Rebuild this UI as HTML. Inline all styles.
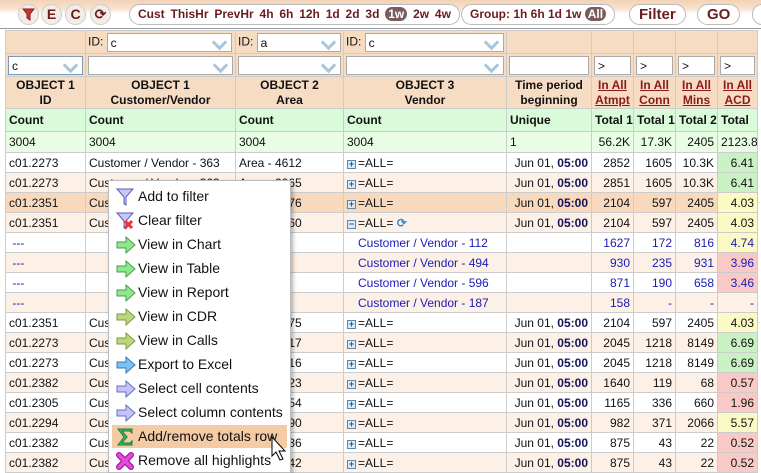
<!DOCTYPE html>
<html><head><meta charset="utf-8"><style>
*{margin:0;padding:0;box-sizing:border-box}
body{width:761px;height:473px;overflow:hidden;background:#fff;font-family:"Liberation Sans",Arial,sans-serif;font-size:12px;color:#111;position:relative}
#top{position:absolute;left:0;top:0;width:761px;height:29px;background:linear-gradient(#f3d2b6 0,#f8e2d0 9px,#fff 14px,#fff 27px);border-bottom:1px solid #999}
.circ{position:absolute;top:4px;width:21px;height:21px;border-radius:50%;background:#f4ece6;border:1px solid #ccc;color:#6b1d1d;font-weight:bold;font-size:14px;text-align:center;line-height:19px}
.pill{position:absolute;top:4px;height:21px;border:1px solid #bbb;border-radius:11px;background:#fff;color:#6b1d1d;font-weight:bold;font-size:12px;line-height:19px;padding:0 8px;white-space:nowrap;word-spacing:2.5px}
.sel{background:#7a5a5a;color:#fff;border-radius:9px;padding:0 3px}
table{position:absolute;left:5px;top:30px;border-collapse:collapse;table-layout:fixed;width:752px}
td{border:1px solid #ccc;height:20px;padding:0 3px;white-space:nowrap;overflow:hidden;font-size:12px}
.f td{background:#f7dcc4;height:23px;padding:1px 2px}
.inp{height:19px;border:1px solid #aaa;background:#fff;position:relative;font-size:12px;line-height:19px;padding-left:3px}
.inp.dd::after{content:"";position:absolute;right:6px;top:3px;width:8px;height:8px;border-right:3px solid #a9c6dc;border-bottom:3px solid #a9c6dc;transform:rotate(45deg)}
.h td{background:#f7dcc4;font-weight:bold;text-align:center;height:32px;line-height:15px}
.h a{color:#8b1a1a;text-decoration:underline}
.c td{background:#d9fbd9;font-weight:bold;height:23px}
.t td{background:#e8fde4;height:21px}
.r td{background:#fff}
.p td{background:#fdf1e7}
.hl td{background:#f8d9bd}
.n{text-align:right}
.b{color:#1a1ab8}
.tp{text-align:right}
.tp b{color:#12125a}
.g{background:#c9f1c3!important}.y{background:#fbfac4!important}.rd{background:#f9c9c6!important}
.pl{display:inline-block;width:9px;height:9px;border:1px solid #5a8ab0;background:#dbe8f5;position:relative;top:0;margin-right:2px;font-size:9px;line-height:7px;text-align:center;color:#2a5a80;font-weight:bold}
#menu{position:absolute;left:108px;top:180px;width:183px;height:293px;background:#fff;border:1px solid #bbb;box-shadow:2px 2px 4px rgba(0,0,0,.3)}
.mi{position:absolute;left:3px;width:175px;height:23px;font-size:14px;line-height:23px;padding-left:26px;color:#111}
.mi svg{position:absolute;left:4px;top:3px}
</style></head><body>
<div id="top">
<div class="circ" style="left:18px"><svg width="13" height="13" viewBox="0 0 13 13" style="margin-top:3px"><path d="M1 1h11L8 6v6L5 10V6z" fill="#c33" stroke="#8b1a1a"/></svg></div>
<div class="circ" style="left:41px">E</div>
<div class="circ" style="left:65px">C</div>
<div class="circ" style="left:90px">&#x27F3;</div>
<div class="pill" style="left:129px">Cust ThisHr PrevHr 4h 6h 12h 1d 2d 3d <span class="sel">1w</span> 2w 4w</div>
<div class="pill" style="left:461px;word-spacing:0">Group: 1h 6h 1d 1w <span class="sel">All</span></div>
<div class="pill" style="left:629px;font-size:15px;padding:0 9px;word-spacing:0">Filter</div>
<div class="pill" style="left:697px;font-size:15px;padding:0 9px;word-spacing:0">GO</div>
<div class="pill" style="left:752px;width:20px"></div>
</div>
<table>
<colgroup><col style="width:80px"><col style="width:150px"><col style="width:108px"><col style="width:163px"><col style="width:85px"><col style="width:42px"><col style="width:42px"><col style="width:42px"><col style="width:40px"></colgroup>
<tr class="f"><td></td><td>ID: <span class="inp dd" style="display:inline-block;width:125px;vertical-align:middle">c</span></td><td>ID: <span class="inp dd" style="display:inline-block;width:84px;vertical-align:middle">a</span></td><td>ID: <span class="inp dd" style="display:inline-block;width:139px;vertical-align:middle">c</span></td><td></td><td></td><td></td><td></td><td></td></tr>
<tr class="f"><td><div class="inp dd" style="border-color:#7a9ab8">c</div></td><td><div class="inp dd"></div></td><td><div class="inp dd"></div></td><td><div class="inp dd"></div></td><td><div class="inp"></div></td><td><div class="inp">&gt;</div></td><td><div class="inp">&gt;</div></td><td><div class="inp">&gt;</div></td><td><div class="inp">&gt;</div></td></tr>
<tr class="h"><td>OBJECT 1<br>ID</td><td>OBJECT 1<br>Customer/Vendor</td><td>OBJECT 2<br>Area</td><td>OBJECT 3<br>Vendor</td><td>Time period<br>beginning</td><td><a>In All<br>Atmpt</a></td><td><a>In All<br>Conn</a></td><td><a>In All<br>Mins</a></td><td><a>In All<br>ACD</a></td></tr>
<tr class="c"><td>Count</td><td>Count</td><td>Count</td><td>Count</td><td>Unique</td><td>Total 1</td><td>Total 1</td><td>Total 2</td><td>Total</td></tr>
<tr class="t"><td>3004</td><td>3004</td><td>3004</td><td>3004</td><td>1</td><td class="n">56.2K</td><td class="n">17.3K</td><td class="n">2405</td><td class="n">2123.8</td></tr>
<tr class="r"><td>c01.2273</td><td>Customer / Vendor - 363</td><td>Area - 4612</td><td><span class="pl">+</span>=ALL=</td><td class="tp">Jun 01, <b>05:00</b></td><td class="n">2852</td><td class="n">1605</td><td class="n">10.3K</td><td class="n g">6.41</td></tr>
<tr class="p"><td>c01.2273</td><td>Customer / Vendor - 363</td><td>Area - 2065</td><td><span class="pl">+</span>=ALL=</td><td class="tp">Jun 01, <b>05:00</b></td><td class="n">2851</td><td class="n">1605</td><td class="n">10.3K</td><td class="n g">6.41</td></tr>
<tr class="hl"><td>c01.2351</td><td>Customer</td><td>Area - 4576</td><td><span class="pl">+</span>=ALL=</td><td class="tp">Jun 01, <b>05:00</b></td><td class="n">2104</td><td class="n">597</td><td class="n">2405</td><td class="n y">4.03</td></tr>
<tr class="p"><td>c01.2351</td><td>Customer</td><td>Area - 4560</td><td><span class="pl">&minus;</span>=ALL= <span style="color:#3a8ad0;font-weight:bold">&#x27F3;</span></td><td class="tp">Jun 01, <b>05:00</b></td><td class="n">2104</td><td class="n">597</td><td class="n">2405</td><td class="n y">4.03</td></tr>
<tr class="r b"><td class="b">&nbsp;---</td><td></td><td></td><td class="b" style="padding-left:14px">Customer / Vendor - 112</td><td></td><td class="n b">1627</td><td class="n b">172</td><td class="n b">816</td><td class="n b y">4.74</td></tr>
<tr class="p"><td class="b">&nbsp;---</td><td></td><td></td><td class="b" style="padding-left:14px">Customer / Vendor - 494</td><td></td><td class="n b">930</td><td class="n b">235</td><td class="n b">931</td><td class="n b rd">3.96</td></tr>
<tr class="r"><td class="b">&nbsp;---</td><td></td><td></td><td class="b" style="padding-left:14px">Customer / Vendor - 596</td><td></td><td class="n b">871</td><td class="n b">190</td><td class="n b">658</td><td class="n b rd">3.46</td></tr>
<tr class="p"><td class="b">&nbsp;---</td><td></td><td></td><td class="b" style="padding-left:14px">Customer / Vendor - 187</td><td></td><td class="n b">158</td><td class="n b">-</td><td class="n b">-</td><td class="n b">-</td></tr>
<tr class="r"><td>c01.2351</td><td>Cus</td><td>Area - 4575</td><td><span class="pl">+</span>=ALL=</td><td class="tp">Jun 01, <b>05:00</b></td><td class="n">2104</td><td class="n">597</td><td class="n">2405</td><td class="n y">4.03</td></tr>
<tr class="p"><td>c01.2273</td><td>Cus</td><td>Area - 4617</td><td><span class="pl">+</span>=ALL=</td><td class="tp">Jun 01, <b>05:00</b></td><td class="n">2045</td><td class="n">1218</td><td class="n">8149</td><td class="n g">6.69</td></tr>
<tr class="r"><td>c01.2273</td><td>Cus</td><td>Area - 4616</td><td><span class="pl">+</span>=ALL=</td><td class="tp">Jun 01, <b>05:00</b></td><td class="n">2045</td><td class="n">1218</td><td class="n">8149</td><td class="n g">6.69</td></tr>
<tr class="p"><td>c01.2382</td><td>Cus</td><td>Area - 4623</td><td><span class="pl">+</span>=ALL=</td><td class="tp">Jun 01, <b>05:00</b></td><td class="n">1640</td><td class="n">119</td><td class="n">68</td><td class="n rd">0.57</td></tr>
<tr class="r"><td>c01.2305</td><td>Cus</td><td>Area - 4654</td><td><span class="pl">+</span>=ALL=</td><td class="tp">Jun 01, <b>05:00</b></td><td class="n">1165</td><td class="n">336</td><td class="n">660</td><td class="n rd">1.96</td></tr>
<tr class="p"><td>c01.2294</td><td>Cus</td><td>Area - 4590</td><td><span class="pl">+</span>=ALL=</td><td class="tp">Jun 01, <b>05:00</b></td><td class="n">982</td><td class="n">371</td><td class="n">2066</td><td class="n y">5.57</td></tr>
<tr class="r"><td>c01.2382</td><td>Cus</td><td>Area - 4636</td><td><span class="pl">+</span>=ALL=</td><td class="tp">Jun 01, <b>05:00</b></td><td class="n">875</td><td class="n">43</td><td class="n">22</td><td class="n rd">0.52</td></tr>
<tr class="p"><td>c01.2382</td><td>Cus</td><td>Area - 4642</td><td><span class="pl">+</span>=ALL=</td><td class="tp">Jun 01, <b>05:00</b></td><td class="n">875</td><td class="n">43</td><td class="n">22</td><td class="n rd">0.52</td></tr>
</table>
<div id="menu">
<div class="mi" style="top:4px"><svg width="18" height="18" viewBox="0 0 18 18"><path d="M1 1h16L10 9v8L8 16V9z" fill="#c8c8f4" stroke="#5a5ac0"/></svg>Add to filter</div>
<div class="mi" style="top:28px"><svg width="18" height="18" viewBox="0 0 18 18"><path d="M1 1h16L10 9v8L8 16V9z" fill="#c8c8f4" stroke="#5a5ac0"/><path d="M9 9l7 7M16 9l-7 7" stroke="#e33" stroke-width="3"/></svg>Clear filter</div>
<div class="mi" style="top:52px"><svg width="20" height="18" viewBox="0 0 20 18"><path d="M1 6h9V1l9 8-9 8v-5H1z" fill="#8de88d" stroke="#4a9a4a"/></svg>View in Chart</div>
<div class="mi" style="top:76px"><svg width="20" height="18" viewBox="0 0 20 18"><path d="M1 6h9V1l9 8-9 8v-5H1z" fill="#8de88d" stroke="#4a9a4a"/></svg>View in Table</div>
<div class="mi" style="top:100px"><svg width="20" height="18" viewBox="0 0 20 18"><path d="M1 6h9V1l9 8-9 8v-5H1z" fill="#8de88d" stroke="#4a9a4a"/></svg>View in Report</div>
<div class="mi" style="top:124px"><svg width="20" height="18" viewBox="0 0 20 18"><path d="M1 6h9V1l9 8-9 8v-5H1z" fill="#bcd67c" stroke="#7a9a3a"/></svg>View in CDR</div>
<div class="mi" style="top:148px"><svg width="20" height="18" viewBox="0 0 20 18"><path d="M1 6h9V1l9 8-9 8v-5H1z" fill="#bcd67c" stroke="#7a9a3a"/></svg>View in Calls</div>
<div class="mi" style="top:172px"><svg width="20" height="18" viewBox="0 0 20 18"><path d="M1 6h9V1l9 8-9 8v-5H1z" fill="#7cc0f4" stroke="#3a7ab0"/></svg>Export to Excel</div>
<div class="mi" style="top:196px"><svg width="20" height="18" viewBox="0 0 20 18"><path d="M1 6h9V1l9 8-9 8v-5H1z" fill="#c4c4fa" stroke="#6a6ac0"/></svg>Select cell contents</div>
<div class="mi" style="top:220px"><svg width="20" height="18" viewBox="0 0 20 18"><path d="M1 6h9V1l9 8-9 8v-5H1z" fill="#c4c4fa" stroke="#6a6ac0"/></svg>Select column contents</div>
<div class="mi" style="top:244px;background:#f5cba6"><svg width="18" height="18" viewBox="0 0 18 18"><path d="M2 1h14v4l-2-2H6l5 6-5 6h8l2-2v4H2l6-8z" fill="#3cc06c" stroke="#1a7a3a"/></svg>Add/remove totals row</div>
<div class="mi" style="top:268px"><svg width="18" height="18" viewBox="0 0 18 18"><path d="M3 3l12 12M15 3L3 15" stroke="#a01a9a" stroke-width="6" stroke-linecap="round"/><path d="M3 3l12 12M15 3L3 15" stroke="#e84ae0" stroke-width="3.5" stroke-linecap="round"/></svg>Remove all highlights</div>
</div>
<svg style="position:absolute;left:271px;top:436px" width="18" height="26" viewBox="0 0 18 26"><path d="M1 1v19l4-4 4 8 3-1-4-8h6z" fill="#fff" stroke="#000"/></svg>
</body></html>
